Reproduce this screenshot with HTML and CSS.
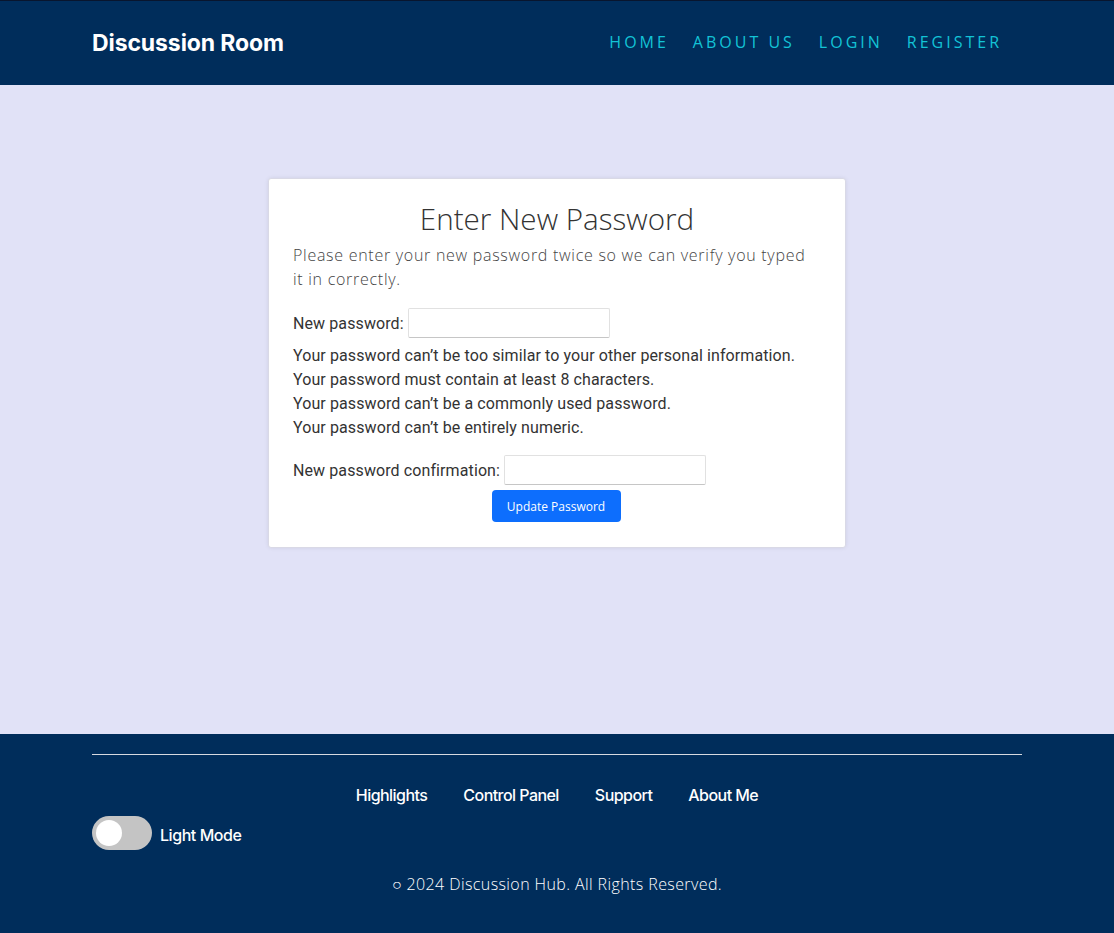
FILE: index.html
```html
<!DOCTYPE html>
<html lang="en">
<head>
<meta charset="utf-8">
<title>Discussion Room</title>
<link rel="stylesheet" href="styles.css">
</head>
<body>
<header class="site-header">
  <div class="container header-inner">
    <a class="brand" href="#">Discussion Room</a>
    <nav class="main-nav">
      <a href="#">Home</a>
      <a href="#">About Us</a>
      <a href="#">Login</a>
      <a href="#">Register</a>
    </nav>
  </div>
</header>
<main class="main">
  <section class="card">
    <h1 class="card-title">Enter New Password</h1>
    <p class="intro">Please enter your new password twice so we can verify you typed it in correctly.</p>
    <form class="pw-form">
      <div class="field">
        <label for="pw1">New password:</label>
        <input id="pw1" type="password">
      </div>
      <ul class="help">
        <li>Your password can’t be too similar to your other personal information.</li>
        <li>Your password must contain at least 8 characters.</li>
        <li>Your password can’t be a commonly used password.</li>
        <li>Your password can’t be entirely numeric.</li>
      </ul>
      <div class="field">
        <label for="pw2">New password confirmation:</label>
        <input id="pw2" type="password">
      </div>
      <div class="actions">
        <button type="button" class="btn">Update Password</button>
      </div>
    </form>
  </section>
</main>
<footer class="site-footer">
  <div class="container">
    <hr class="footer-rule">
    <nav class="footer-nav">
      <a href="#">Highlights</a>
      <a href="#">Control Panel</a>
      <a href="#">Support</a>
      <a href="#">About Me</a>
    </nav>
    <div class="mode">
      <span class="switch"><span class="knob"></span></span>
      <span class="mode-label">Light Mode</span>
    </div>
    <p class="copy">○ 2024 Discussion Hub. All Rights Reserved.</p>
  </div>
</footer>
</body>
</html>
```

FILE: styles.css
```css
* { box-sizing: border-box; }
html, body { margin: 0; padding: 0; }
body {
  font-family: "Open Sans", sans-serif;
  background: #e1e2f7;
  color: #333;
  min-height: 933px;
  display: flex;
  flex-direction: column;
}
a { text-decoration: none; }

.container {
  width: 930px;
  margin: 0 auto;
}

.site-header {
  background: #002d5b;
  border-top: 1px solid #08152e;
  height: 85px;
}
.header-inner {
  height: 84px;
  display: flex;
  align-items: center;
  justify-content: space-between;
}
.brand {
  font-family: Inter, sans-serif;
  font-weight: 700;
  font-size: 23px;
  letter-spacing: -0.1px;
  color: #fff;
  margin-top: -1px;
}
.main-nav {
  display: flex;
  gap: 24px;
  padding-right: 20px;
  margin-top: -3px;
}
.main-nav a {
  font-family: "Open Sans", sans-serif;
  font-size: 16px;
  font-weight: 400;
  text-transform: uppercase;
  letter-spacing: 3px;
  color: #13c3d6;
}

.main {
  flex: 1;
  display: flex;
  justify-content: center;
  align-items: flex-start;
  padding-top: 93px;
  height: 649px;
}
.card {
  width: 578px;
  background: #fff;
  border: 1px solid #d9d9e6;
  border-radius: 3px;
  box-shadow: 0 0 4px rgba(0,0,0,0.08);
  padding: 21px 27px 25px 24px;
}
.card-title {
  font-family: "Open Sans", sans-serif;
  font-weight: 300;
  font-size: 29.6px;
  line-height: 38px;
  text-align: center;
  color: #333;
  margin: 0 0 5px 3px;
}
.intro {
  font-family: "Open Sans", sans-serif;
  font-weight: 300;
  font-size: 16px;
  letter-spacing: 0.72px;
  line-height: 24px;
  color: #444;
  margin: 0 0 17px;
}
.pw-form {
  font-family: Roboto, sans-serif;
  font-size: 16px;
  letter-spacing: 0.1px;
  color: #333;
}
.field {
  display: flex;
  align-items: center;
  gap: 4px;
  height: 30px;
}
.field input {
  width: 202px;
  height: 30px;
  border: 1px solid #e1e1e1;
  border-bottom-color: #c6c6c6;
  border-radius: 2px;
  background: #fff;
  padding: 0 6px;
}
.help {
  list-style: none;
  margin: 6px 0 15px;
  padding: 0;
  line-height: 24px;
}
.actions {
  display: flex;
  justify-content: center;
  margin-top: 5px;
  padding-left: 3px;
}
.btn {
  font-family: "Open Sans", sans-serif;
  font-size: 12px;
  font-weight: 400;
  color: #fff;
  background: #0d6efd;
  border: 0;
  border-radius: 4px;
  width: 129px;
  height: 32px;
  padding: 0;
  margin-right: 2px;
}

.site-footer {
  background: #002d5b;
  height: 199px;
  padding-top: 20px;
}
.footer-rule {
  border: 0;
  border-top: 1px solid #d6d9e0;
  margin: 0;
}
.footer-nav {
  display: flex;
  justify-content: center;
  gap: 36px;
  margin-top: 30px;
  padding-left: 0;
}
.footer-nav a {
  font-family: Inter, sans-serif;
  font-weight: 500;
  font-size: 16px;
  letter-spacing: -0.55px;
  color: #fff;
}
.mode {
  display: flex;
  align-items: center;
  gap: 8px;
  margin-top: 11px;
}
.switch {
  width: 60px;
  height: 34px;
  border-radius: 17px;
  background: #c4c4c4;
  display: flex;
  align-items: center;
  padding-left: 4px;
}
.knob {
  width: 26px;
  height: 26px;
  border-radius: 50%;
  background: #fff;
}
.mode-label {
  font-family: Inter, sans-serif;
  font-weight: 500;
  font-size: 16px;
  letter-spacing: -0.45px;
  color: #fff;
  margin-top: 4px;
}
.copy {
  font-family: "Open Sans", sans-serif;
  font-weight: 300;
  font-size: 16px;
  letter-spacing: 0.4px;
  color: #fff;
  text-align: center;
  margin: 23px 0 0;
}
```
